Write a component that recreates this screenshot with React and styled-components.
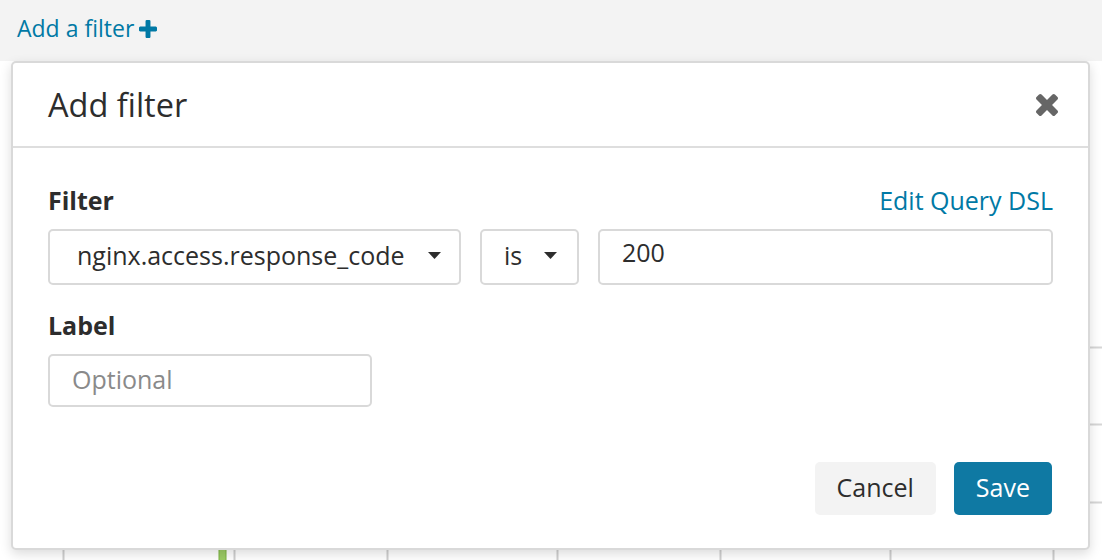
import React from 'react';
import styled, { createGlobalStyle } from 'styled-components';

const GlobalStyle = createGlobalStyle`
  html, body {
    margin: 0;
    padding: 0;
    background: #ffffff;
  }
  body {
    font-family: "Open Sans", "Liberation Sans", sans-serif;
    color: #2d2d2d;
  }
  * {
    box-sizing: border-box;
  }
`;

const Page = styled.div`
  position: relative;
  width: 1102px;
  height: 560px;
  overflow: hidden;
  background: #ffffff;
`;

const TopBar = styled.div`
  height: 61px;
  padding: 13px 0 0 17px;
  background: #f3f3f3;
  display: flex;
  align-items: flex-start;
`;

const AddLink = styled.a`
  display: flex;
  align-items: center;
  gap: 5px;
  font-size: 23px;
  line-height: 31px;
  color: #0079a5;
  text-decoration: none;
  cursor: pointer;
`;

const Chart = styled.svg`
  display: block;
`;

const Modal = styled.div`
  position: absolute;
  top: 61px;
  left: 11px;
  width: 1079px;
  background: #ffffff;
  border: 2px solid #d9d9d9;
  border-radius: 5px;
  box-shadow: 0 4px 12px rgba(0, 0, 0, 0.14);
`;

const ModalHeader = styled.div`
  height: 85px;
  padding: 0 30px 0 35px;
  display: flex;
  align-items: center;
  justify-content: space-between;
  border-bottom: 2px solid #dedede;
`;

const Title = styled.h2`
  margin: 0;
  font-size: 32.5px;
  line-height: 48px;
  font-weight: 400;
  color: #2d2d2d;
`;

const CloseButton = styled.button`
  border: none;
  background: none;
  padding: 0;
  display: flex;
  color: #666666;
  cursor: pointer;
`;

const ModalBody = styled.div`
  padding: 35px 35px 33px;
`;

const Group = styled.div`
  margin-top: ${p => p.spaced ? '23px' : '0'};
`;

const LabelRow = styled.div`
  display: flex;
  justify-content: space-between;
  align-items: baseline;
  margin-bottom: 12px;
  line-height: 34px;
`;

const Label = styled.label`
  font-size: 25px;
  font-weight: 700;
  color: #2d2d2d;
`;

const TextLink = styled.a`
  font-size: 25px;
  color: #0079a5;
  text-decoration: none;
  cursor: pointer;
`;

const Controls = styled.div`
  display: flex;
  gap: 19px;
`;

const Select = styled.div`
  width: ${p => p.width}px;
  height: 56px;
  padding: 0 ${p => p.padRight}px 4px ${p => p.padLeft}px;
  display: flex;
  align-items: center;
  border: 2px solid #d9d9d9;
  border-radius: 5px;
  font-size: 25px;
  color: #2d2d2d;
  background: #ffffff;

  svg {
    margin-left: auto;
  }
`;

const Input = styled.div`
  flex: ${p => p.width ? 'none' : '1'};
  width: ${p => p.width ? `${p.width}px` : 'auto'};
  height: ${p => p.height}px;
  padding: 0 22px ${p => p.lift}px;
  display: flex;
  align-items: center;
  border: 2px solid #d9d9d9;
  border-radius: 5px;
  font-size: 25px;
  color: ${p => p.placeholder ? '#8a8a8a' : '#2d2d2d'};
`;

const Footer = styled.div`
  margin-top: 55px;
  margin-right: 1px;
  display: flex;
  justify-content: flex-end;
  gap: 18px;
`;

const Button = styled.button`
  height: 53px;
  padding: 0 22px 4px;
  border: none;
  border-radius: 5px;
  font-family: "Open Sans", "Liberation Sans", sans-serif;
  font-size: 25px;
  background: ${p => p.primary ? '#0f79a3' : '#f3f3f3'};
  color: ${p => p.primary ? '#ffffff' : '#2d2d2d'};
  cursor: pointer;
`;

const PlusIcon = () => (
  <svg width="18" height="18" viewBox="0 192 1408 1408" fill="#0079a5">
    <path d="M1408 800v192q0 40-28 68t-68 28h-416v416q0 40-28 68t-68 28h-192q-40 0-68-28t-28-68v-416h-416q-40 0-68-28t-28-68v-192q0-40 28-68t68-28h416v-416q0-40 28-68t68-28h192q40 0 68 28t28 68v416h416q40 0 68 28t28 68z" />
  </svg>
);

const TimesIcon = () => (
  <svg width="22" height="22" viewBox="110 366 1188 1188" fill="currentColor">
    <path d="M1298 1322q0 40-28 68l-136 136q-28 28-68 28t-68-28l-294-294-294 294q-28 28-68 28t-68-28l-136-136q-28-28-28-68t28-68l294-294-294-294q-28-28-28-68t28-68l136-136q28-28 68-28t68 28l294 294 294-294q28-28 68-28t68 28l136 136q28 28 28 68t-28 68l-294 294 294 294q28 28 28 68z" />
  </svg>
);

const Caret = () => (
  <svg width="13" height="7" viewBox="0 0 13 7">
    <polygon points="0,0 13,0 6.5,7" fill="#2d2d2d" />
  </svg>
);

const gridY = [286, 363, 441];
const ticksX = [63, 234, 387, 557, 720, 890, 1053];

const App = () => {
  return (
    <Page>
      <GlobalStyle />
      <TopBar>
        <AddLink>Add a filter <PlusIcon /></AddLink>
      </TopBar>
      <Chart width="1102" height="499" viewBox="0 0 1102 499">
        {gridY.map(y => (
          <line key={y} x1="40" y1={y + 0.5} x2="1102" y2={y + 0.5} stroke="#d6d6d6" strokeWidth="2" />
        ))}
        {ticksX.map(x => (
          <line key={x} x1={x + 0.5} y1="470" x2={x + 0.5} y2="499" stroke="#cfcfcf" strokeWidth="2" />
        ))}
        <rect x="219" y="460" width="7" height="40" fill="#9ccc65" stroke="#7cb342" strokeWidth="1" />
      </Chart>
      <Modal>
        <ModalHeader>
          <Title>Add filter</Title>
          <CloseButton><TimesIcon /></CloseButton>
        </ModalHeader>
        <ModalBody>
          <Group>
            <LabelRow>
              <Label>Filter</Label>
              <TextLink>Edit Query DSL</TextLink>
            </LabelRow>
            <Controls>
              <Select width={413} padLeft={27} padRight={18}>
                nginx.access.response_code
                <Caret />
              </Select>
              <Select width={99} padLeft={22} padRight={20}>
                is
                <Caret />
              </Select>
              <Input height={56} lift={10}>200</Input>
            </Controls>
          </Group>
          <Group spaced>
            <LabelRow>
              <Label>Label</Label>
            </LabelRow>
            <Input width={324} height={53} lift={4} placeholder>Optional</Input>
          </Group>
          <Footer>
            <Button>Cancel</Button>
            <Button primary>Save</Button>
          </Footer>
        </ModalBody>
      </Modal>
    </Page>
  );
};

export default App;
